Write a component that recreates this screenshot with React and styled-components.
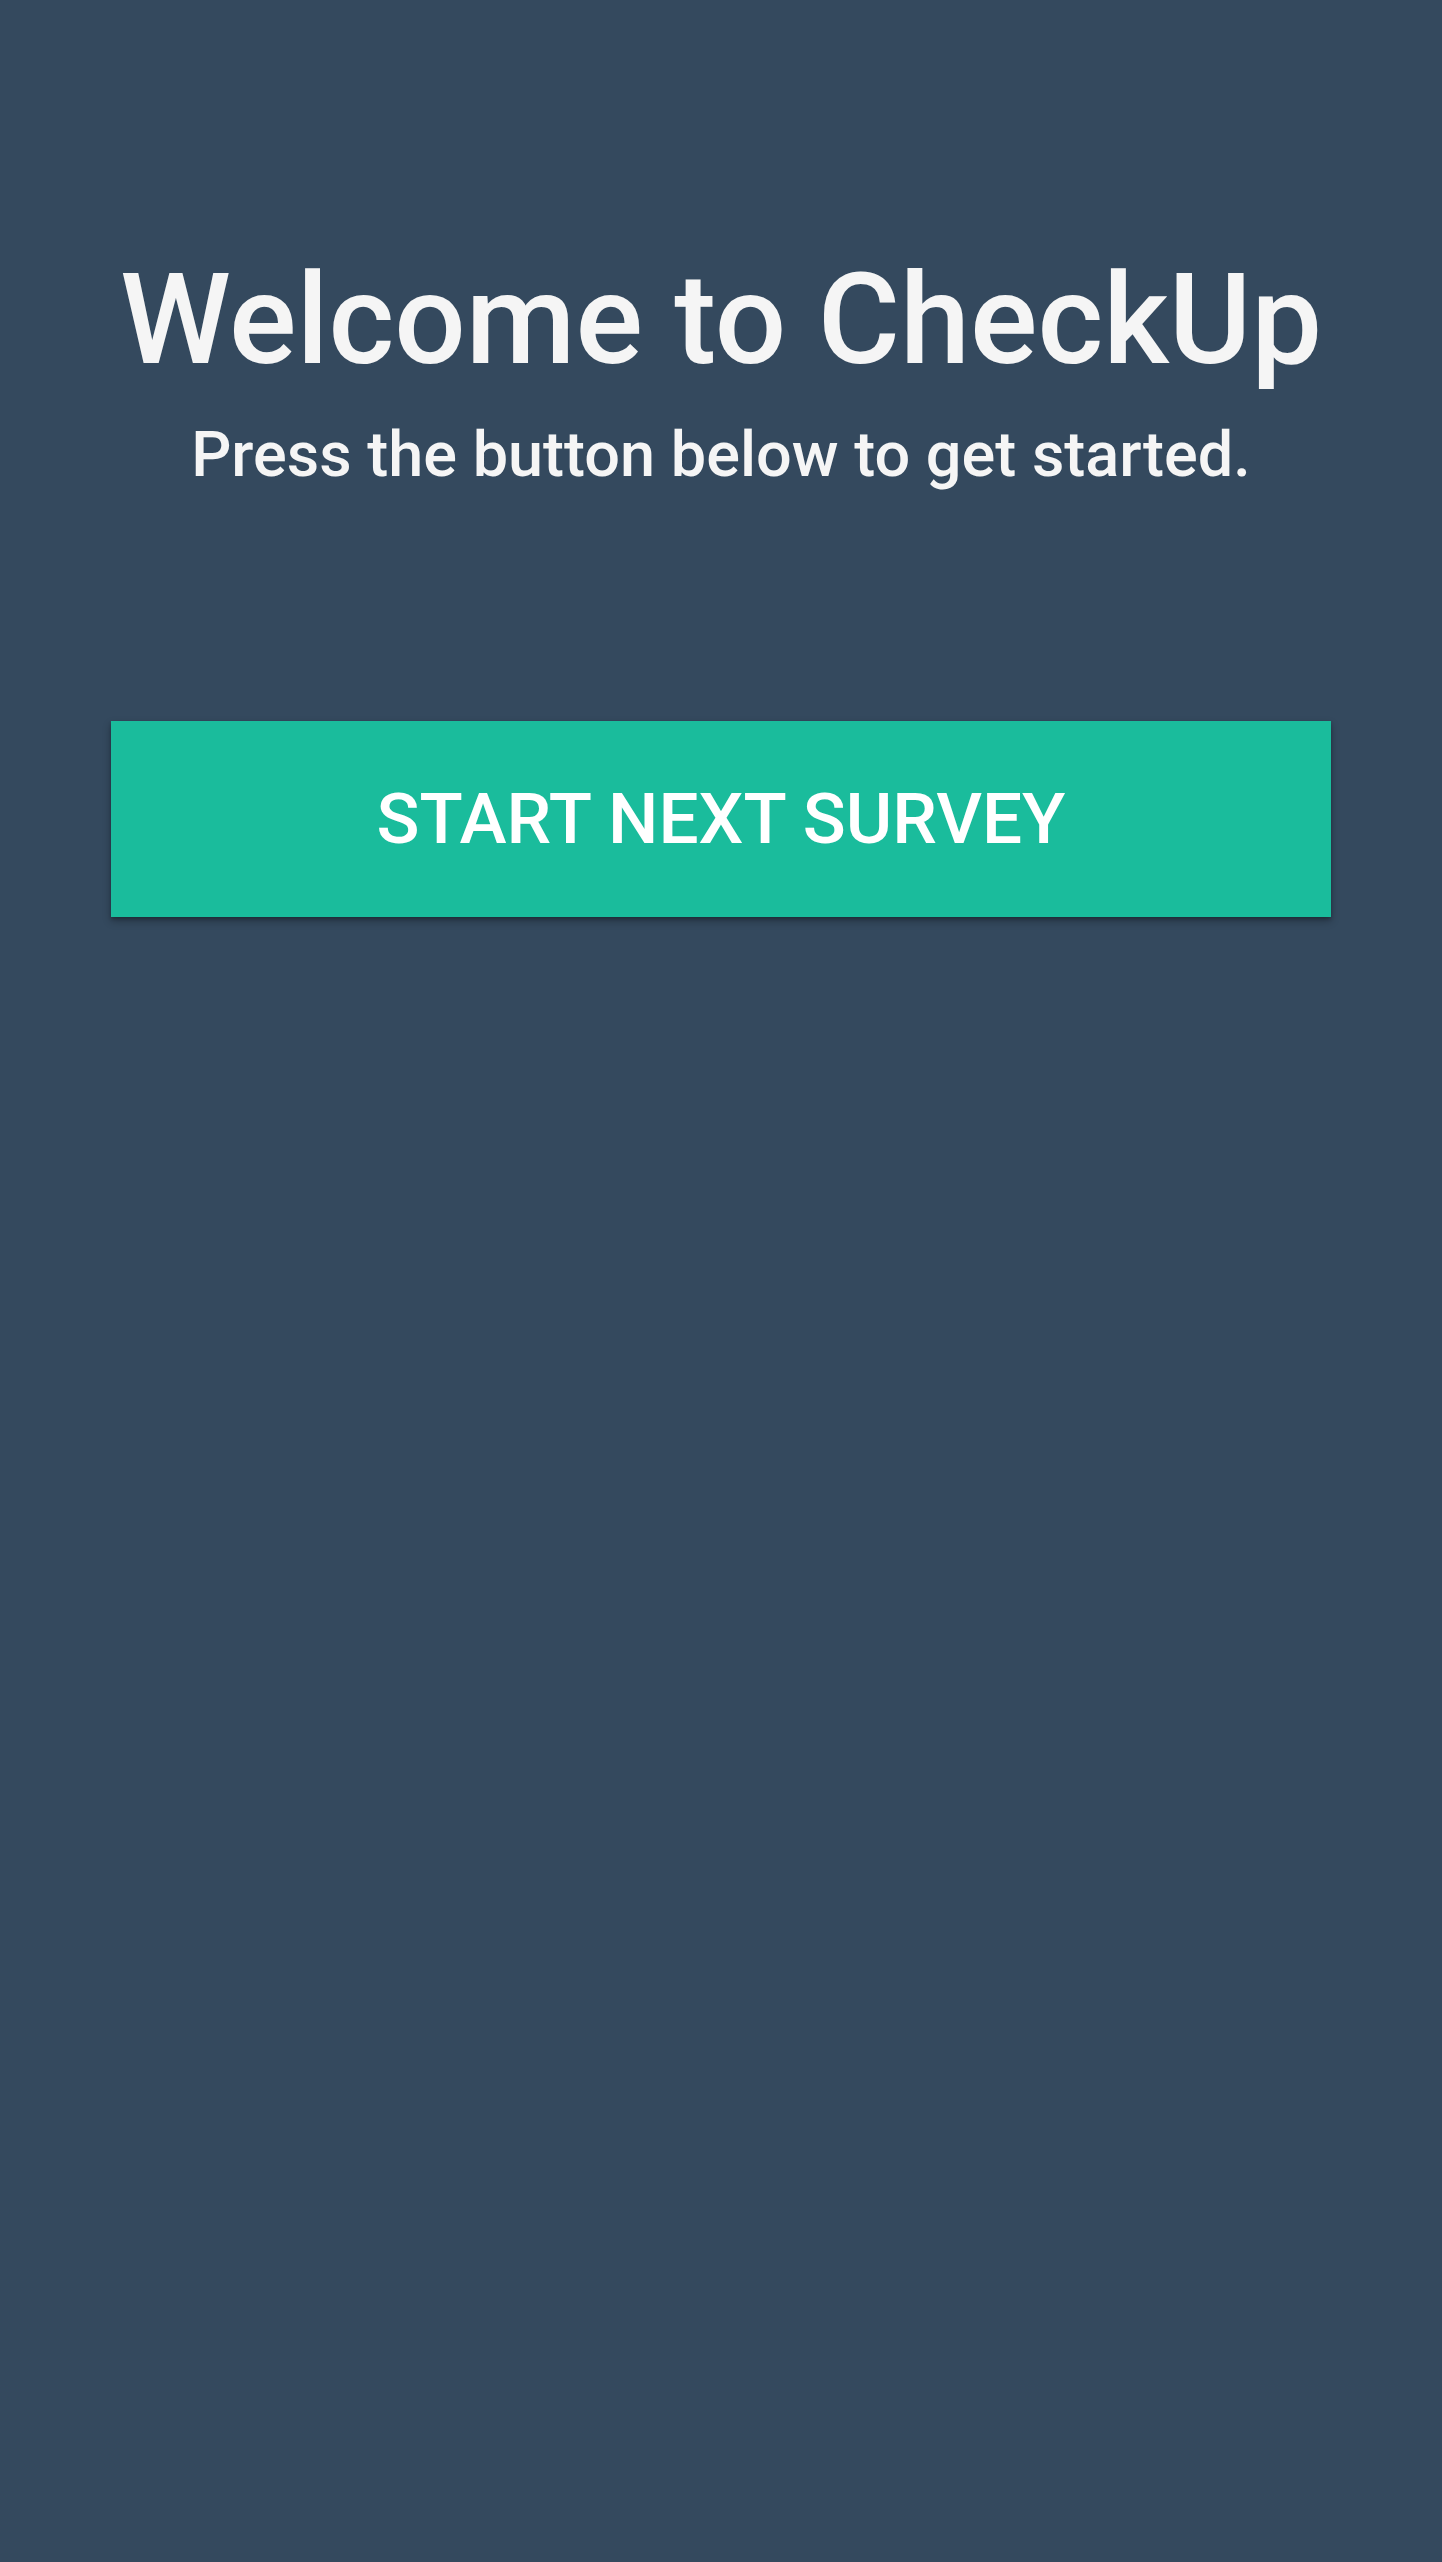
import React from "react";
import styled, { createGlobalStyle } from "styled-components";

const GlobalStyle = createGlobalStyle`
  html, body {
    margin: 0;
    padding: 0;
    background: #34495e;
  }
  body {
    font-family: Roboto, "Liberation Sans", sans-serif;
  }
`;

const Screen = styled.div`
  min-height: 2562px;
  background: #34495e;
  display: flex;
  flex-direction: column;
  align-items: center;
  padding: 245px 111px 0;
  box-sizing: border-box;
`;

const Title = styled.h1`
  margin: 0;
  font-size: 126px;
  font-weight: 500;
  line-height: 1.2;
  color: #f5f5f5;
  text-align: center;
  white-space: nowrap;
`;

const Subtitle = styled.p`
  margin: 21px 0 0;
  font-size: 63px;
  font-weight: 500;
  line-height: 1.2;
  color: #f5f5f5;
  text-align: center;
  white-space: nowrap;
`;

const StartButton = styled.button`
  margin-top: 228px;
  width: 100%;
  height: 196px;
  border: none;
  border-radius: 0;
  background: #1abc9c;
  color: #ffffff;
  font-family: Roboto, "Liberation Sans", sans-serif;
  font-size: 71px;
  font-weight: 500;
  text-transform: uppercase;
  box-shadow: 0 4px 8px rgba(0, 0, 0, 0.3), 0 2px 3px rgba(0, 0, 0, 0.2);
  cursor: pointer;
`;

export default function App() {
  return (
    <>
      <GlobalStyle />
      <Screen>
        <Title>Welcome to CheckUp</Title>
        <Subtitle>Press the button below to get started.</Subtitle>
        <StartButton>Start Next Survey</StartButton>
      </Screen>
    </>
  );
}
